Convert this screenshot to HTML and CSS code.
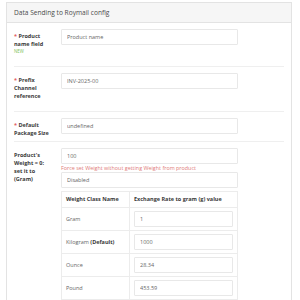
FILE: index.html
```html
<!DOCTYPE html>
<html lang="en">
  <head>
    <meta charset="UTF-8" />
    <meta name="viewport" content="width=device-width, initial-scale=1.0" />
    <title>Roymail config</title>
    <link rel="stylesheet" href="styles.css">
  </head>
  <body>
    <div class="panel">
      <div class="panel-heading">Data Sending to Roymail config</div>
      <div class="panel-body">
        <div class="form-group required tall">
          <label class="control-label">Product name field <span class="new">NEW</span></label>
          <div class="control">
            <input class="form-control" type="text" value="Product name" />
          </div>
        </div>
        <div class="form-group required tall">
          <label class="control-label">Prefix Channel reference</label>
          <div class="control">
            <input class="form-control" type="text" value="INV-2025-00" />
          </div>
        </div>
        <div class="form-group required short">
          <label class="control-label">Default Package Size</label>
          <div class="control">
            <input class="form-control" type="text" value="undefined" />
          </div>
        </div>
        <div class="form-group">
          <label class="control-label">Product's Weight = 0: set it to (Gram)</label>
          <div class="control">
            <input class="form-control" type="text" value="100" />
            <div class="help-error">Force set Weight without getting Weight from product</div>
            <select class="form-control">
              <option>Disabled</option>
            </select>
            <table class="weights">
              <thead>
                <tr>
                  <th class="col-name">Weight Class Name</th>
                  <th>Exchange Rate to gram (g) value</th>
                </tr>
              </thead>
              <tbody>
                <tr>
                  <td>Gram</td>
                  <td><input class="form-control" type="text" value="1" /></td>
                </tr>
                <tr>
                  <td>Kilogram <b>(Default)</b></td>
                  <td><input class="form-control" type="text" value="1000" /></td>
                </tr>
                <tr>
                  <td>Ounce</td>
                  <td><input class="form-control" type="text" value="28.34" /></td>
                </tr>
                <tr>
                  <td>Pound</td>
                  <td><input class="form-control" type="text" value="453.59" /></td>
                </tr>
              </tbody>
            </table>
          </div>
        </div>
      </div>
    </div>
  </body>
</html>
```

FILE: styles.css
```css
body {
  margin: 0;
  font-family: "Open Sans", sans-serif;
  font-size: 5.5px;
  color: #666;
  background-color: #fff;
}
.panel {
  margin: 2px 8px 0 6px;
  border: 1px solid #e3e3e3;
  border-bottom: none;
}
.panel-heading {
  height: 19px;
  line-height: 19px;
  padding: 0 7px;
  background-color: #f6f6f6;
  border-bottom: 1px solid #e3e3e3;
  font-size: 6.6px;
  color: #4a4a4a;
}
.panel-body {
  padding: 0 7px;
}
.form-group {
  display: grid;
  grid-template-columns: 47px 177px;
  padding: 6px 0 7px;
  border-top: 1px solid #efefef;
}
.form-group:first-child {
  border-top: none;
}
.form-group.tall {
  padding-bottom: 11px;
}
.form-group.short {
  padding-bottom: 4px;
}
.control-label {
  padding: 3px 9px 0 0;
  line-height: 8px;
  font-weight: 700;
  color: #3a3a3a;
}
.required .control-label::before {
  content: "* ";
  color: #e25d5d;
}
.new {
  display: block;
  line-height: 7px;
  font-size: 4.4px;
  font-weight: 400;
  color: #7cbf5a;
}
.form-control {
  display: block;
  box-sizing: border-box;
  width: 100%;
  height: 16px;
  margin: 0;
  padding: 0 5px;
  border: 1px solid #e8e8e8;
  border-radius: 1px;
  background-color: #fff;
  font-family: inherit;
  font-size: 5.5px;
  color: #666;
  appearance: none;
  outline: none;
}
.help-error {
  margin-top: 1px;
  line-height: 7px;
  font-size: 5.4px;
  color: #e07a78;
}
.weights {
  width: 100%;
  margin-top: 3px;
  border-collapse: collapse;
}
.weights th,
.weights td {
  border: 1px solid #ececec;
  text-align: left;
}
.weights th {
  padding: 4px 4px;
  line-height: 7px;
  font-weight: 700;
  color: #3a3a3a;
}
.weights td {
  padding: 3px 4px;
}
.weights .col-name {
  width: 59px;
}
.weights b {
  color: #3a3a3a;
}
```
